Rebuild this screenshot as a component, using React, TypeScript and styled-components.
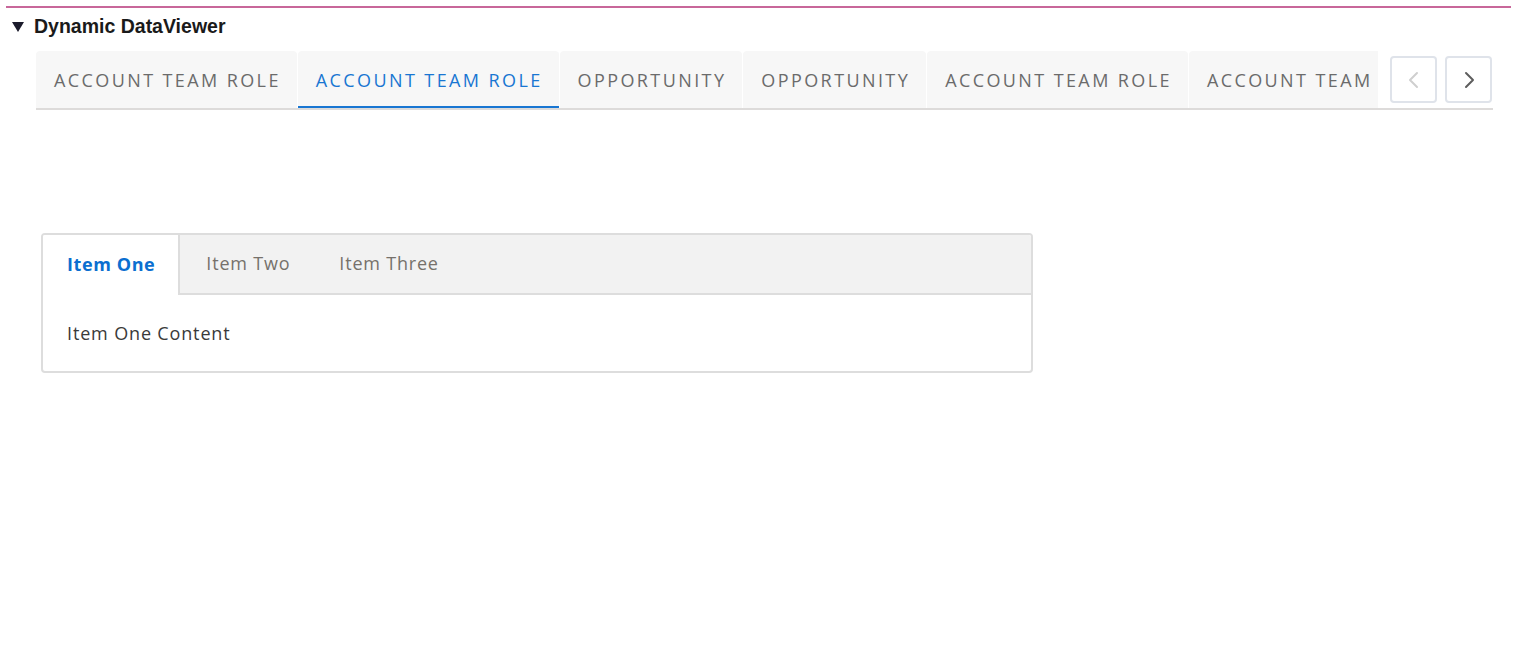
import React from "react";
import styled, { createGlobalStyle } from "styled-components";

const Global = createGlobalStyle`
  html, body { margin: 0; padding: 0; background: #ffffff; }
  body { font-family: "Liberation Sans", Arial, sans-serif; }
  * { box-sizing: border-box; }
`;

const Page = styled.div`
  padding: 6px 2px 0 6px;
  width: 1513px;
`;

const Section = styled.section`
  border-top: 2px solid #c8679a;
`;

const SectionHeader = styled.div`
  display: flex;
  align-items: center;
  height: 30px;
  margin-top: 3px;
  padding-left: 6px;
  gap: 10px;
`;

const Caret = styled.span`
  width: 0;
  height: 0;
  border-left: 6px solid transparent;
  border-right: 6px solid transparent;
  border-top: 10px solid #1b1b2b;
  margin-top: 2px;
`;

const Title = styled.h2`
  margin: 0;
  font: bold 19.5px "Liberation Sans", Arial, sans-serif;
  color: #1a1a1a;
`;

const TabBar = styled.div`
  display: flex;
  align-items: center;
  margin: 10px 18px 0 30px;
  border-bottom: 2px solid #dddbda;
  height: 59px;
`;

const TabScroller = styled.div`
  display: flex;
  width: 1342px;
  overflow: hidden;
  height: 57px;
  align-self: flex-start;
`;

const Tab = styled.div<{ $active?: boolean }>`
  flex: none;
  display: flex;
  align-items: center;
  height: 57px;
  padding: 0 16px 0 18px;
  background: #f7f7f7;
  border-radius: 4px 4px 0 0;
  margin-right: 1px;
  font-family: "Open Sans", sans-serif;
  font-size: 18px;
  letter-spacing: 2.4px;
  color: ${(p) => (p.$active ? "#1976d2" : "#6b6b6b")};
  box-shadow: ${(p) => (p.$active ? "inset 0 -2px 0 #1976d2" : "none")};
  white-space: nowrap;
`;

const NavGroup = styled.div`
  display: flex;
  gap: 8px;
  margin-left: 12px;
`;

const NavButton = styled.button<{ $disabled?: boolean }>`
  width: 47px;
  height: 47px;
  border: 2px solid #dfe3ea;
  border-radius: 4px;
  background: #fff;
  display: flex;
  align-items: center;
  justify-content: center;
  padding: 0;
  color: ${(p) => (p.$disabled ? "#cfcfcf" : "#5e5e5e")};
`;

const Card = styled.div`
  margin: 123px 0 0 35px;
  width: 992px;
  border: 2px solid #dddddd;
  border-radius: 4px;
  overflow: hidden;
`;

const CardTabs = styled.div`
  display: flex;
  height: 60px;
  background: #f2f2f2;
  border-bottom: 2px solid #dddddd;
`;

const CardTab = styled.div<{ $active?: boolean }>`
  display: flex;
  align-items: center;
  padding: 0 ${(p) => (p.$active ? "23px 2px 24px" : "23px 2px 26px")};
  height: ${(p) => (p.$active ? "60px" : "58px")};
  background: ${(p) => (p.$active ? "#ffffff" : "transparent")};
  border-right: ${(p) => (p.$active ? "2px solid #dddddd" : "none")};
  font-family: "Open Sans", sans-serif;
  font-size: 18px;
  letter-spacing: ${(p) => (p.$active ? "0.6px" : "0.8px")};
  font-weight: ${(p) => (p.$active ? 700 : 400)};
  color: ${(p) => (p.$active ? "#0b6fd0" : "#76716b")};
  position: relative;
  z-index: 1;
`;

const CardBody = styled.div`
  padding: 25px 24px 25px;
  font-family: "Open Sans", sans-serif;
  font-size: 18px;
  letter-spacing: 0.85px;
  line-height: 26px;
  color: #3a3a3a;
`;

const Chevron = ({ dir }: { dir: "left" | "right" }) => (
  <svg width="14" height="20" viewBox="0 0 14 20" fill="none">
    <path
      d={dir === "left" ? "M10 3 L3 10 L10 17" : "M4 3 L11 10 L4 17"}
      stroke="currentColor"
      strokeWidth="2"
      strokeLinecap="round"
      strokeLinejoin="round"
    />
  </svg>
);

const tabs = [
  "ACCOUNT TEAM ROLE",
  "ACCOUNT TEAM ROLE",
  "OPPORTUNITY",
  "OPPORTUNITY",
  "ACCOUNT TEAM ROLE",
  "ACCOUNT TEAM ROLE",
];

export default function App() {
  return (
    <Page>
      <Global />
      <Section>
        <SectionHeader>
          <Caret />
          <Title>Dynamic DataViewer</Title>
        </SectionHeader>
        <TabBar>
          <TabScroller>
            {tabs.map((t, i) => (
              <Tab key={i} $active={i === 1}>
                {t}
              </Tab>
            ))}
          </TabScroller>
          <NavGroup>
            <NavButton $disabled aria-label="Previous">
              <Chevron dir="left" />
            </NavButton>
            <NavButton aria-label="Next">
              <Chevron dir="right" />
            </NavButton>
          </NavGroup>
        </TabBar>
        <Card>
          <CardTabs>
            <CardTab $active>Item One</CardTab>
            <CardTab>Item Two</CardTab>
            <CardTab>Item Three</CardTab>
          </CardTabs>
          <CardBody>Item One Content</CardBody>
        </Card>
      </Section>
    </Page>
  );
}
